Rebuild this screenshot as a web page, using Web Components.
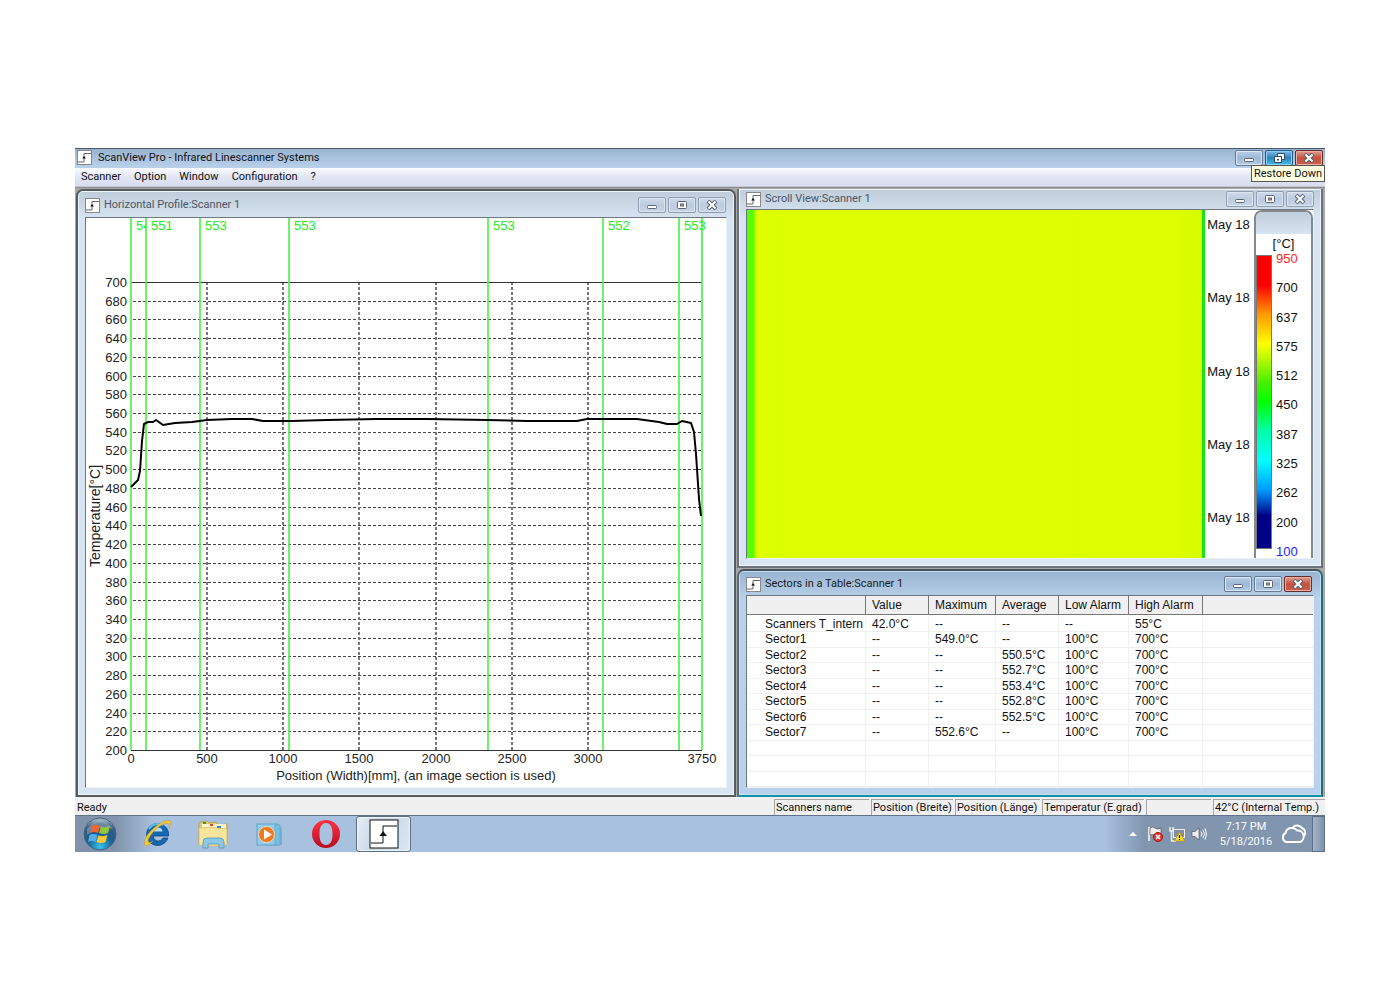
<!DOCTYPE html>
<html lang="en">
<head>
<meta charset="utf-8">
<title>ScanView Pro - Infrared Linescanner Systems</title>
<style>
  body { margin: 0; padding: 148px 75px; background: #fff; font: 11px/16px Roboto, "Noto Sans", sans-serif; color: #111; }
</style>
</head>
<body>
<scan-app></scan-app>
<script>
const define = (name, html, setup) => {
  const tpl = document.createElement('template');
  tpl.innerHTML = html;
  customElements.define(name, class extends HTMLElement {
    constructor() {
      super();
      this.attachShadow({ mode: 'open' }).append(tpl.content.cloneNode(true));
    }
    connectedCallback() { if (setup) setup(this.shadowRoot, this); }
  });
};

/* step-edge application logo */
define('step-icon', `
<style>
  :host { display: block; width: 15px; height: 15px; flex: none; }
  svg { display: block; width: 100%; height: 100%; }
</style>
<svg viewBox="0 0 30 30"><rect x="1" y="1" width="28" height="28" fill="#fff" stroke="var(--edge, #888)" stroke-width="var(--edge-width, 2)"/>
<path d="M2 24H14V7H28" fill="none" stroke="var(--step, #666)" stroke-width="var(--step-width, 2)"/><path d="M10.500 17L14 12L18 17Z" fill="#111"/></svg>`);

/* minimise / restore / close */
define('caption-buttons', `
<style>
  :host { display: flex; gap: 2px; flex: none; }
  button { width: 28px; height: 16px; padding: 0; border: 1px solid #8e9db0; border-radius: 2px; background: linear-gradient(#cddaea, #bccbdf 50%, #c6d5e6); box-shadow: inset 0 0 0 1px #dce6f1; display: flex; align-items: center; justify-content: center; }
  svg { display: block; width: 12px; height: 10px; }
  :host([tone="active"]) button { border-color: #62799a; background: linear-gradient(#bcd0e8, #9db7d6 50%, #b2cae4); }
  :host([tone="active"]) button.close { border-color: #6a2a2a; background: linear-gradient(#e0a093, #c4513d 50%, #c7604b); box-shadow: inset 0 0 0 1px #e6b0a4; }
  :host([hot]) button.max { border-color: #235a86; background: linear-gradient(#7fbbe3, #2f83bd 50%, #3fc0ea); box-shadow: inset 0 0 0 1px #8ed0f0; }
</style>
<button aria-label="Minimize"><svg viewBox="0 0 12 10"><rect x="1.500" y="5.500" width="9" height="3" rx="1" fill="#fff" stroke="#5a6472"/></svg></button>
<button class="max" aria-label="Maximize"></button>
<button class="close" aria-label="Close"><svg viewBox="0 0 12 10"><path d="M2 1L10 9M10 1L2 9" stroke="#5a6472" stroke-width="4"/><path d="M2.500 1.500L9.500 8.500M9.500 1.500L2.500 8.500" stroke="#fff" stroke-width="2"/></svg></button>`,
(root, host) => {
  root.querySelector('.max').innerHTML = host.hasAttribute('hot')
    ? '<svg viewBox="0 0 12 10"><path d="M4.500 .5H11.500V6.500H4.500Z" fill="#fff" stroke="#2b4d6e"/><path d="M1.500 3.500H8.500V9.500H1.500Z" fill="#fff" stroke="#2b4d6e"/><rect x="4" y="6" width="2" height="1.500" fill="#2b4d6e"/></svg>'
    : '<svg viewBox="0 0 12 10"><rect x="1.500" y="1.500" width="9" height="7" rx="1" fill="#fff" stroke="#5a6472"/><rect x="4.500" y="4" width="3" height="2" fill="#aab" stroke="#5a6472"/></svg>';
});

define('mdi-window', `
<style>
  :host { display: flex; flex-direction: column; min-width: 0; min-height: 0; box-sizing: border-box; padding: 0 7px 7px; border: 1px solid #6b7178; border-width: 1px 2px 2px; background: linear-gradient(#bfcddb, #d7e4f2 28px); color: #4b5563; box-shadow: inset 0 0 0 1px #eef4fa; }
  :host([rounded]) { border-radius: 7px 7px 0 0; border-top-width: 2px; border-color: #565b60; }
  :host([active]) { background: linear-gradient(#99b4d1, #b9d1ea 28px); color: #1a1a1a; border-color: #48525c #20707c #1692a8 #5d6a76; box-shadow: inset 0 0 0 1px #c6def2; }
  header { display: flex; align-items: center; gap: 4px; height: var(--caption, 20px); flex: none; box-sizing: border-box; }
  :host([rounded]) header { padding: 2px 1px 0 0; }
  :host([active]) header { padding-right: 2px; }
  h2 { margin: 0; flex: 1; font: inherit; white-space: nowrap; }
  section { flex: 1; min-height: 0; display: flex; border: 1px solid #6f757c; border-right-color: #edf1f5; border-bottom-color: #edf1f5; background: #fff; color: #111; }
  ::slotted(*) { flex: 1; min-width: 0; }
</style>
<header><step-icon></step-icon><h2></h2><caption-buttons></caption-buttons></header>
<section><slot></slot></section>`,
(root, host) => {
  root.querySelector('h2').textContent = host.getAttribute('caption');
  if (host.hasAttribute('active')) root.querySelector('caption-buttons').setAttribute('tone', 'active');
});

/* horizontal temperature profile */
define('profile-chart', `
<style>
  :host { display: block; }
  svg { display: block; width: 100%; height: 100%; font: 13px "Liberation Sans", Arial, sans-serif; fill: #222; }
  .grid { stroke: #444; stroke-dasharray: 3 2; fill: none; }
  .down { stroke: #777; stroke-width: 2; }
  .axis { stroke: #333; fill: none; }
  .sector { stroke: #4df54d; stroke-width: 2; fill: none; opacity: .85; }
  .mark { fill: #19f019; }
  .name { font-size: 14px; }
  .curve { stroke: #000; stroke-width: 2; fill: none; stroke-linejoin: round; }
</style>
<svg viewBox="0 0 640 569" role="img" aria-label="Temperature profile"></svg>`,
(root) => {
  const X = mm => Math.round(45 + mm * 571 / 3750), Y = t => Math.round(532 - (t - 200) * 468 / 500);
  let s = '<defs><clipPath id="first"><rect x="45" y="0" width="15" height="20"/></clipPath></defs>';
  for (let t = 220; t < 700; t += 20) s += `<path class="grid" d="M47 ${Y(t)}.5H615"/>`;
  for (let m = 500; m <= 3000; m += 500) s += `<path class="grid down" d="M${X(m)} 64V532"/>`;
  s += `<path class="axis" d="M45 64.500H616M45 532.500H616"/>`;
  for (let t = 200; t <= 700; t += 20) s += `<text x="41" y="${Y(t) + 5}" text-anchor="end">${t}</text>`;
  for (const m of [0, 500, 1000, 1500, 2000, 2500, 3000, 3750]) s += `<text x="${X(m)}" y="545" text-anchor="middle">${m}</text>`;
  for (const x of [45, 60, 114, 203, 402, 517, 593, 616]) s += `<path class="sector" d="M${x} 0V532"/>`;
  for (const [x, v] of [[45, 54], [60, 551], [114, 553], [203, 553], [402, 553], [517, 552], [593, 553]])
    s += `<text class="mark" x="${x + 5}" y="12"${v === 54 ? ' clip-path="url(#first)"' : ''}>${v}</text>`;
  const curve = [[45,269],[52,262],[54,253],[56,223],[58,206],[62,204],[67,204],[70,202],[77,207],[89,205],[106,204],[121,202],[146,201],[166,201],[177,203],[206,203],[241,202],[291,201],[341,201],[401,202],[441,203],[491,203],[501,201],[521,201],[551,201],[573,204],[581,206],[591,206],[596,203],[605,205],[608,214],[610,236],[613,281],[615,298]];
  s += `<polyline class="curve" points="${curve.join(' ')}"/>`;
  s += `<text x="330" y="562" text-anchor="middle">Position (Width)[mm], (an image section is used)</text>`;
  s += `<text class="name" transform="translate(14 298) rotate(-90)" text-anchor="middle">Temperature[°C]</text>`;
  root.querySelector('svg').innerHTML = s;
});

/* scrolling thermal image with time stamps and colour scale */
define('scroll-view', `
<style>
  :host { display: flex; font: 13px/16px "Liberation Sans", Arial, sans-serif; }
  .heat { flex: 1; background: linear-gradient(90deg, #55ff00 7px, #c8fb00 8px, #deff00 12px, #deff00 27px, #d9ff00 28px, #deff00 40px, #deff00 70%, #dbff00 72%, #deff00 75%, #deff00 94%, #d8fd00 98%); border-right: 3px solid #14e614; }
  .times { width: 49px; display: flex; flex-direction: column; justify-content: space-between; align-items: center; padding: 7px 2px 32px 0; box-sizing: border-box; white-space: nowrap; }
  .scale { width: 59px; box-sizing: border-box; border: 2px solid #84898f; border-bottom: 0; border-radius: 8px 8px 0 0; display: flex; flex-direction: column; }
  .cap { height: 22px; flex: none; border-radius: 6px 6px 0 0; background: linear-gradient(#bfcddb, #d7e4f2); }
  .unit { text-align: center; line-height: 20px; height: 16px; flex: none; }
  .body { display: flex; flex: 1; gap: 4px; min-height: 0; }
  .bar { box-sizing: border-box; width: 16px; margin: 5px 0 9px; border: 1px solid #777; background: linear-gradient(#f00 10%, #ff9a00 20%, #ff0 30%, #4cf000 43%, #0f0 50%, #0fa 60%, #0ff 70%, #009dff 80%, #000087 89%); }
  .vals { display: flex; flex-direction: column; justify-content: space-between; padding-top: 3px; line-height: 12px; }
  .hi { color: #f22; } .lo { color: #22f; }
</style>
<div class="heat"></div>
<div class="times"><span>May 18</span><span>May 18</span><span>May 18</span><span>May 18</span><span>May 18</span></div>
<div class="scale"><div class="cap"></div><div class="unit">[°C]</div>
<div class="body"><div class="bar"></div><div class="vals"></div></div></div>`,
(root) => {
  root.querySelector('.vals').innerHTML = [950, 700, 637, 575, 512, 450, 387, 325, 262, 200, 100]
    .map(v => `<span class="${v === 950 ? 'hi' : v === 100 ? 'lo' : ''}">${v}</span>`).join('');
});

define('sector-table', `
<style>
  :host { display: flex; font: 12px/15px "Liberation Sans", Arial, sans-serif; }
  table { flex: 1; display: flex; flex-direction: column; }
  tr { display: grid; grid-template-columns: 119px 63px 67px 63px 70px 74px 1fr; }
  thead { background: #f0f0f0; border-bottom: 1px solid #777; margin-bottom: 2px; }
  th { font-weight: 400; text-align: left; height: 18px; line-height: 19px; padding: 0 0 0 6px; border-right: 1px solid #777; white-space: nowrap; }
  th:last-child { border: 0; }
  tbody { flex: 1; display: grid; grid-auto-rows: 1fr; min-height: 0; }
  td { padding: 0 0 0 6px; border-right: 1px solid #f0f0f0; border-bottom: 1px solid #f0f0f0; white-space: nowrap; min-height: 0; }
  th:first-child, td:first-child { padding-left: 18px; }
  td:last-child { border-right: 0; }
  tbody tr { min-height: 0; }
</style>
<table><thead><tr><th></th><th>Value</th><th>Maximum</th><th>Average</th><th>Low Alarm</th><th>High Alarm</th><th></th></tr></thead><tbody></tbody></table>`,
(root) => {
  const rows = [
    ['Scanners T_intern', '42.0°C', '--', '--', '--', '55°C'],
    ['Sector1', '--', '549.0°C', '--', '100°C', '700°C'],
    ['Sector2', '--', '--', '550.5°C', '100°C', '700°C'],
    ['Sector3', '--', '--', '552.7°C', '100°C', '700°C'],
    ['Sector4', '--', '--', '553.4°C', '100°C', '700°C'],
    ['Sector5', '--', '--', '552.8°C', '100°C', '700°C'],
    ['Sector6', '--', '--', '552.5°C', '100°C', '700°C'],
    ['Sector7', '--', '552.6°C', '--', '100°C', '700°C'],
    [], [], []];
  root.querySelector('tbody').innerHTML = rows.map(r => '<tr>' + Array.from({ length: 7 }, (_, i) => `<td>${r[i] || ''}</td>`).join('') + '</tr>').join('');
});

define('status-bar', `
<style>
  :host { display: flex; gap: 2px; height: 18px; box-sizing: border-box; padding-top: 2px; background: #f0f0f0; white-space: nowrap; }
  span { box-sizing: border-box; padding-left: 1px; border: 1px solid #a5a5a5; border-width: 1px 0 0 1px; line-height: 15px; width: var(--w); }
  .ready { flex: 1; border-color: transparent; }
</style>
<span class="ready">Ready</span><span style="--w:95px">Scanners name</span><span style="--w:82px">Position (Breite)</span><span style="--w:85px">Position (Länge)</span><span style="--w:102px">Temperatur (E.grad)</span><span style="--w:65px"></span><span style="--w:112px">42°C (Internal Temp.)</span>`);

define('task-bar', `
<style>
  :host { display: flex; align-items: center; height: 37px; box-sizing: border-box; border-top: 1px solid #62738a; background: linear-gradient(90deg, #8093ab 40px, #a8c1df 80px calc(100% - 220px), #8195af calc(100% - 180px)); }
  button { padding: 0; border: 0; background: none; width: 56px; height: 36px; display: flex; align-items: center; justify-content: center; }
  button svg { display: block; width: 34px; height: 34px; }
  .start { width: 50px; margin-right: 4px; }
  .on { width: 55px; margin-left: 3px; border: 1px solid #5d6f86; border-radius: 3px; background: linear-gradient(110deg, #e6edf5, #c7d5e6 45%, #dbe6f2); box-shadow: inset 0 0 0 1px #f0f5fa; }
  .on step-icon { width: 30px; height: 30px; --edge: #111; --step: #111; --edge-width: 1; --step-width: 1; }
  .tray { margin-left: auto; display: flex; align-items: center; gap: 6px; color: #fff; }
  .tray svg { display: block; width: 16px; height: 16px; }
  .clock { text-align: center; width: 60px; line-height: 15px; margin-left: 3px; }
  .tray .cloud { width: 30px; height: 22px; margin: 0 -3px 0 -3px; }
  .show { width: 13px; height: 36px; border: 1px solid #5e7088; background: linear-gradient(90deg, #a3b4ca, #7f92ab); box-sizing: border-box; }
</style>
<button class="start" aria-label="Start"><svg viewBox="0 0 34 34"><defs><radialGradient id="orb" cx=".5" cy=".9" r=".9"><stop offset="0" stop-color="#35c5ee"/><stop offset=".45" stop-color="#1b5d91"/><stop offset=".8" stop-color="#3c5f80"/><stop offset="1" stop-color="#b8cbd8"/></radialGradient></defs>
<circle cx="17" cy="17" r="16" fill="url(#orb)" stroke="#48627c"/><path d="M4 12Q17-6 30 12Q17 7 4 18Z" fill="#fff" opacity=".25"/><path d="M9 9Q12 6 17 9L15 16Q11 14 7 16Z" fill="#ef6532"/><path d="M18 9.500Q22 11 27 9L25 16Q21 18 16 16Z" fill="#91c83e"/><path d="M6.500 18Q10 16 14.500 18L12.500 25Q9 23 5 25Z" fill="#53aee6"/><path d="M15.500 18.500Q20 20 24.500 18L22.500 25Q18 27 13.500 25Z" fill="#fdc82f"/></svg></button>
<button aria-label="Internet Explorer"><svg viewBox="0 0 34 34"><path d="M28 21A11 11 0 1 1 28.500 16V19H13Q14 24 18.500 24Q21.500 24 23 21Z" fill="#1768b3" stroke="#0d4582" stroke-width=".8"/><path d="M13 14.500Q14 10.500 18 10.500Q22 10.500 22.500 14.500Z" fill="#b5dcf4"/><path d="M9 12Q14 5 23 8" fill="none" stroke="#62bef0" stroke-width="2"/><path d="M13 24Q5 32 4.500 27Q4 19 15 10Q27 1 30 4Q32 6 29 11Q30 6 27 6Q22 6 14 14Q7 22 8 25Q9 27 13 24Z" fill="#f4c936" stroke="#c59817" stroke-width=".5"/></svg></button>
<button aria-label="Windows Explorer"><svg viewBox="0 0 34 34"><path d="M3 7Q3 5 5 5L11 4L13 6L20 5L22 8L31 7L31 26L3 27Z" fill="#e8ca6b" stroke="#b59338" stroke-width=".7"/><path d="M6 7H30V12H6Z" fill="#fff6cf"/><path d="M3 11Q16 9 31 12V28Q17 30 3 28Z" fill="#f8e59b" stroke="#d2b55b" stroke-width=".7"/><path d="M7 5H10V7H7Z" fill="#2f9e3c"/><path d="M14 7H17V9H14Z" fill="#dd4433"/><path d="M21 9H25V11H21Z" fill="#3d82cc"/><path d="M7 31V25Q7 21 11 21H24Q28 21 28 25V31H23V27H12V31Z" fill="#8cc9e8" stroke="#4f95bd" stroke-width=".8"/></svg></button>
<button aria-label="Media Player"><svg viewBox="0 0 34 34"><path d="M27 9L30 11V28L10 29L27 27Z" fill="#6fb4d5"/><rect x="5" y="7" width="21" height="21" fill="#8ecdeb" stroke="#61a4c8"/><path d="M23 8H28V28H23Z" fill="#79bedf" stroke="#5ba0c4" stroke-width=".6"/><circle cx="14.500" cy="17.500" r="8" fill="#f27a1b" stroke="#fde2c4" stroke-width=".8"/><path d="M12 12.500L20 17.500L12 22.500Z" fill="#fff"/></svg></button>
<button aria-label="Opera"><svg viewBox="0 0 34 34"><defs><linearGradient id="op" x2="0" y2="1"><stop offset="0" stop-color="#ff3344"/><stop offset="1" stop-color="#b80d20"/></linearGradient></defs><path fill-rule="evenodd" fill="url(#op)" d="M18 3A14 14 0 1 1 18 31A14 14 0 1 1 18 3ZM18 6C13.500 6 11.500 10 11.500 17S13.500 28 18 28S24.500 24 24.500 17S22.500 6 18 6Z"/></svg></button>
<button class="on" aria-label="ScanView Pro"><step-icon></step-icon></button>
<div class="tray">
<svg viewBox="0 0 16 16"><path d="M4 10L8 6L12 10Z" fill="#fff"/></svg>
<svg viewBox="0 0 16 16"><path d="M2 1V15" stroke="#fff" stroke-width="1.500"/><path d="M3 2Q6 0 8 2T14 2V9Q10 10 8 9T3 9Z" fill="#eee" stroke="#555" stroke-width=".7"/><circle cx="11" cy="11" r="4.500" fill="#dc3a35" stroke="#a11"/><path d="M9 9L13 13M13 9L9 13" stroke="#fff" stroke-width="1.500"/></svg>
<svg viewBox="0 0 16 16"><rect x="4.500" y="3.500" width="11" height="8" fill="#7e8fa5" stroke="#eee"/><path d="M1 1V5H4V1M2.500 5V15H7" fill="none" stroke="#eee" stroke-width="1.500"/><path d="M10.500 6L15.500 15H5.500Z" fill="#ffdc25" stroke="#b18d00" stroke-width=".6"/><path d="M10.500 9V12M10.500 13V14" stroke="#222" stroke-width="1.200"/></svg>
<svg viewBox="0 0 16 16"><path d="M1 5.500H4L8 2V14L4 10.500H1Z" fill="#eee" stroke="#556" stroke-width=".7"/><path d="M10 5.500Q12 8 10 10.500M12 4Q15 8 12 12M14 2.500Q17 8 14 13.500" fill="none" stroke="#fff"/></svg>
<div class="clock">7:17 PM<br>5/18/2016</div>
<svg class="cloud" viewBox="0 0 30 22"><path d="M7 19A5 5 0 0 1 6.500 10A6.500 6.500 0 0 1 18 7.500A6 6 0 0 1 21 19ZM14 4A6 6 0 0 1 23 5A5 5 0 0 1 25 13" fill="none" stroke="#fff" stroke-width="2" stroke-linejoin="round"/></svg>
<div class="show"></div>
</div>`);

define('scan-app', `
<style>
  :host { display: block; }
  .title { position: relative; display: flex; align-items: center; gap: 6px; height: 20px; box-sizing: border-box; padding: 0 2px 2px 2px; border-top: 1px solid #4c5866; background: linear-gradient(#99b4d1, #bad1ea); }
  h1 { margin: 0; flex: 1; font: inherit; white-space: nowrap; }
  .tip { position: absolute; right: 0; top: 16px; z-index: 2; box-sizing: border-box; height: 17px; padding: 0 2px; border: 1px solid #555; background: #ffffe1; line-height: 15px; white-space: nowrap; }
  nav { display: flex; height: 19px; box-sizing: border-box; padding-left: 6px; gap: 13px; background: linear-gradient(#fbfcfe, #e2e6f4 50%, #d7dcef); border-bottom: 1px solid #c4c8d4; }
  nav button { padding: 0; border: 0; background: none; font: inherit; color: inherit; line-height: 18px; }
  main { display: grid; grid-template-columns: 660fr 586fr; column-gap: 1px; height: 610px; box-sizing: border-box; padding: 1px 2px 0 1px; background: #a8a8a8; border-top: 1px solid #8a8a8a; }
  .right { display: flex; flex-direction: column; gap: 1px; min-width: 0; }
  .profile { --caption: 26px; }
  .scroll { flex: 1; --caption: 20px; border-top: 0; }
  .sectors { flex: none; height: 228px; --caption: 24px; }
</style>
<div class="title"><step-icon></step-icon><h1>ScanView Pro - Infrared Linescanner Systems</h1><caption-buttons tone="active" hot></caption-buttons><div class="tip" role="tooltip">Restore Down</div></div>
<nav><button>Scanner</button><button>Option</button><button>Window</button><button>Configuration</button><button>?</button></nav>
<main>
  <mdi-window class="profile" rounded caption="Horizontal Profile:Scanner 1"><profile-chart></profile-chart></mdi-window>
  <div class="right">
    <mdi-window class="scroll" caption="Scroll View:Scanner 1"><scroll-view></scroll-view></mdi-window>
    <mdi-window class="sectors" rounded active caption="Sectors in a Table:Scanner 1"><sector-table></sector-table></mdi-window>
  </div>
</main>
<status-bar></status-bar>
<task-bar></task-bar>`);
</script>
</body>
</html>
